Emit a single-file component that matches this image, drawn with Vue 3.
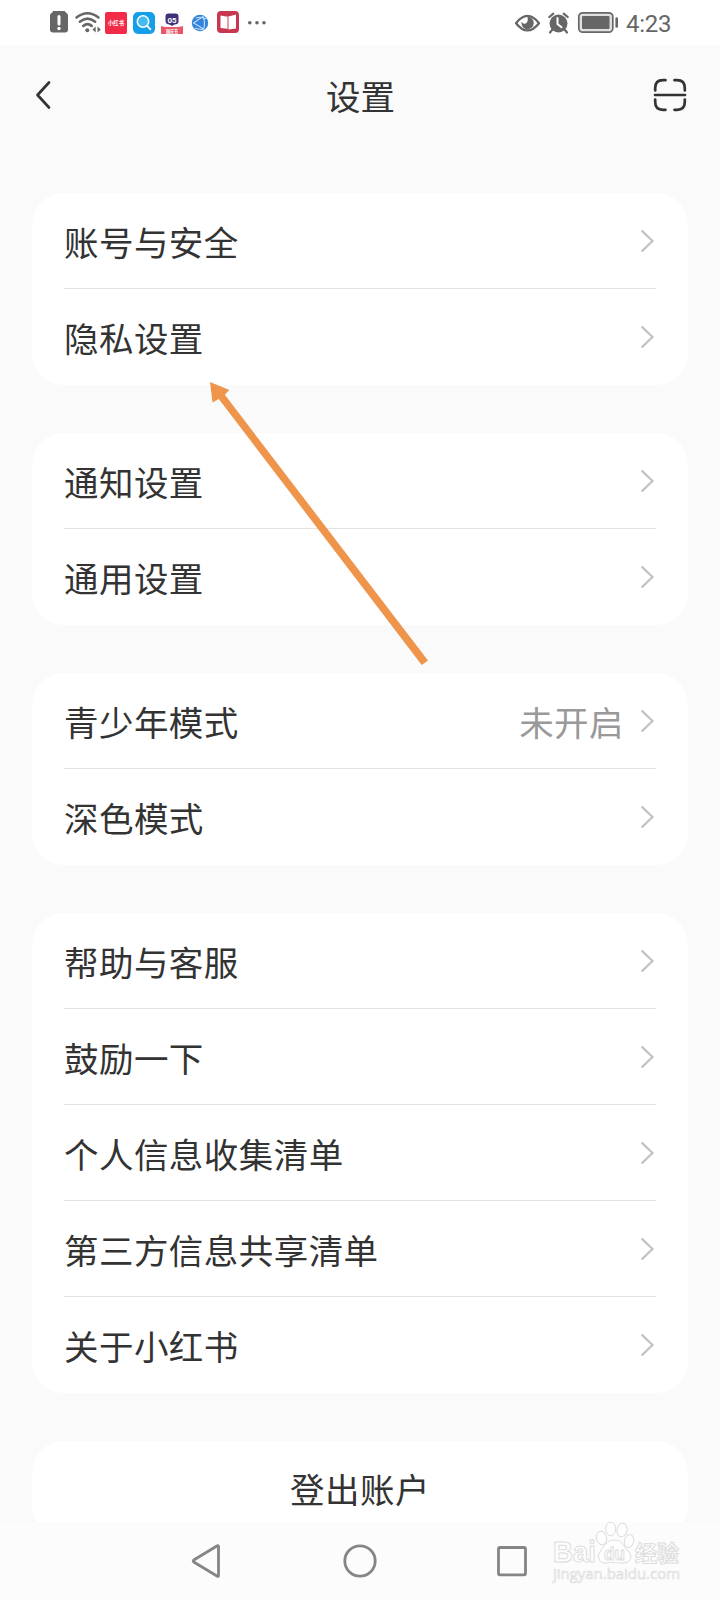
<script setup>
const groups = [
  [{ label: '账号与安全' }, { label: '隐私设置' }],
  [{ label: '通知设置' }, { label: '通用设置' }],
  [{ label: '青少年模式', value: '未开启' }, { label: '深色模式' }],
  [
    { label: '帮助与客服' },
    { label: '鼓励一下' },
    { label: '个人信息收集清单' },
    { label: '第三方信息共享清单' },
    { label: '关于小红书' },
  ],
]
</script>

<template>
  <div class="screen">
    <div class="status">
      <svg class="status-icons" width="230" height="45" viewBox="40 0 230 45">
        <path d="M53.500 11H64.500l3.500 3.500v15a3 3 0 0 1-3 3H53a3 3 0 0 1-3-3V14.500z" fill="#666" />
        <path d="M59 16.500v7.500" stroke="#fff" stroke-width="3" stroke-linecap="round" />
        <circle cx="59" cy="28.500" r="1.700" fill="#fff" />
        <g fill="none" stroke="#666" stroke-width="2.500" stroke-linecap="round">
          <path d="M76.500 17.500q11-8.500 22 0" />
          <path d="M79.800 21.800q7.700-6.400 15.400 0" />
          <path d="M83.200 26q4.300-3.800 8.600 0" />
        </g>
        <circle cx="87.300" cy="30.300" r="2" fill="#666" />
        <path d="M95.700 26.500v6l-3.300-3zM97.500 26.500v6l3.300-3z" fill="#666" />
        <rect x="105" y="12" width="22" height="22" rx="2" fill="#f22b49" />
        <text x="108" y="25.400" class="tiny" textLength="16" lengthAdjust="spacingAndGlyphs">小红书</text>
        <rect x="133" y="12" width="22" height="22" rx="5" fill="#159fe8" />
        <circle cx="143" cy="21.500" r="5.700" fill="#45b9f0" stroke="#fff" stroke-width="1.600" />
        <path d="M147.200 25.800l3.200 3.500" stroke="#fff" stroke-width="1.800" stroke-linecap="round" />
        <path d="M168.500 13.500h7q3 0 3 3v5q0 3-4 3l-2.500 1.500-2.500-1.500q-4 0-4-4v-4q0-3 3-3z" fill="#413079" />
        <text x="172" y="22.500" class="badge" text-anchor="middle">05</text>
        <path d="M161 26l4 1h14l4-1v8h-22z" fill="#e85766" />
        <text x="166" y="32.600" class="ribbon" textLength="12" lengthAdjust="spacingAndGlyphs">国庆节</text>
        <circle cx="200" cy="23" r="8.200" fill="#3583d9" />
        <path d="M193.500 23l9.500-6.500q2.500 6 .7 12.500zM196 18q5-2 10 1M195 28q5 2 9 1" fill="none" stroke="#bfe0ff" stroke-width="1.100" />
        <rect x="217" y="11" width="22" height="22" rx="4" fill="#c9364f" />
        <path d="M220.500 15.500l7 1.300v12l-7-.8zM228.500 16.500l7.500-2v14l-7.500 1z" fill="#fff" />
        <path d="M228 16v13" stroke="#e7a5a9" />
        <g fill="#666">
          <circle cx="249.800" cy="22.700" r="1.800" />
          <circle cx="257" cy="22.700" r="1.800" />
          <circle cx="264" cy="22.700" r="1.800" />
        </g>
      </svg>
      <svg class="system-icons" width="110" height="45" viewBox="510 0 110 45">
        <path d="M516 23.200q11.500-14.500 23 0q-11.500 14.500-23 0z" fill="none" stroke="#666" stroke-width="2.300" stroke-linejoin="round" />
        <path d="M527.500 16.800a6.200 6.200 0 1 1-6 5q2 3 4.500 1.500 2.500-1.800 1.500-6.500z" fill="#666" />
        <circle cx="558.500" cy="23.500" r="9" fill="#666" />
        <path d="M549.300 17l4-3.300M563.700 13.700l4 3.300M552.500 29.500l-2.500 3M564.500 29.500l2.500 3" stroke="#666" stroke-width="2.200" stroke-linecap="round" />
        <path d="M557.500 18v6l4 3.200" fill="none" stroke="#fff" stroke-width="2" stroke-linecap="round" />
        <rect x="578.800" y="12.800" width="34" height="19.400" rx="4" fill="#e0e0e0" stroke="#666" stroke-width="1.700" />
        <rect x="582" y="16" width="27.500" height="13" rx="1" fill="#666" />
        <path d="M616.700 18.500v8" stroke="#666" stroke-width="2.600" stroke-linecap="round" />
      </svg>
      <span class="clock">4:23</span>
    </div>

    <header class="header">
      <svg width="16" height="30" viewBox="0 0 16 30" class="stroke-dark">
        <path d="M14 2.500L2.500 15 14 27.500" />
      </svg>
      <h1>设置</h1>
      <svg width="34" height="34" viewBox="0 0 34 34" class="stroke-dark">
        <path d="M2.200 12.500V10q0-7.800 7.800-7.800h2.500M21.500 2.200H24q7.800 0 7.800 7.800v2.500M2.200 21.500V24q0 7.800 7.800 7.800h2.500M21.500 31.800H24q7.800 0 7.800-7.800v-2.500M2 17h30" />
      </svg>
    </header>

    <main class="content">
      <section v-for="(rows, g) in groups" :key="g" class="card">
        <div v-for="row in rows" :key="row.label" class="row">
          <span class="label">{{ row.label }}</span>
          <span v-if="row.value" class="value">{{ row.value }}</span>
          <svg width="14" height="24" viewBox="0 0 14 24" class="chevron">
            <path d="M2.300 2.200L12.500 12 2.300 21.800" />
          </svg>
        </div>
      </section>
      <section class="card logout">登出账户</section>
    </main>

    <nav class="nav">
      <svg width="720" height="78" viewBox="0 1522 720 78">
        <g fill="none" stroke="#858585" stroke-width="2.800" stroke-linejoin="round">
          <path d="M218.500 1546.500v29q0 1.200-1.200.7l-23.500-14.200q-1.200-1 0-2l23.500-14.200q1.200-.5 1.200.7z" />
          <circle cx="360" cy="1561" r="15.200" />
          <rect x="498.500" y="1547.500" width="27" height="27.300" rx="1.500" />
        </g>
      </svg>
    </nav>

    <svg class="watermark" width="150" height="72" viewBox="545 1518 150 72">
      <g fill="#fefefe" stroke="#dcdcdc" stroke-width="1">
        <ellipse cx="601.500" cy="1538" rx="5" ry="6.800" transform="rotate(-15 601.500 1538)" />
        <ellipse cx="610.700" cy="1529" rx="5" ry="6.800" />
        <ellipse cx="622" cy="1530" rx="5" ry="6.800" transform="rotate(12 622 1530)" />
        <ellipse cx="629" cy="1541" rx="4.700" ry="6.500" transform="rotate(15 629 1541)" />
        <path d="M615 1540c7 0 8 6 13 11s3 12-5 12-12-1-17 0-10-5-6-11 7-12 15-12z" />
        <text x="553" y="1562" class="wm-latin" textLength="43" lengthAdjust="spacingAndGlyphs">Bai</text>
        <text x="604" y="1559.500" class="wm-du" textLength="21" lengthAdjust="spacingAndGlyphs">du</text>
        <text x="635" y="1560.500" class="wm-cjk" textLength="44" lengthAdjust="spacingAndGlyphs">经验</text>
        <text x="553" y="1579" class="wm-url" textLength="127" lengthAdjust="spacingAndGlyphs">jingyan.baidu.com</text>
      </g>
    </svg>

    <svg class="arrow" width="225" height="290" viewBox="205 377 225 290">
      <path d="M210 382l19.300 8-4.500 4.800L428 660.500l-6.300 4.500L218.800 399l-6.300 3.500z" fill="#ef944b" />
    </svg>
  </div>
</template>

<style>
body {
  margin: 0;
}
</style>

<style scoped>
.screen {
  position: relative;
  width: 720px;
  height: 1600px;
  overflow: hidden;
  display: flex;
  flex-direction: column;
  background: #fafafa;
  color: #333;
  font-family: "Noto Sans CJK SC", sans-serif;
}
svg {
  display: block;
  flex: none;
}
.status {
  height: 45px;
  flex: none;
  display: flex;
  background: #fff;
  padding: 0 49px 0 40px;
}
.system-icons {
  margin-left: auto;
}
.clock {
  width: 51px;
  padding-left: 6px;
  box-sizing: border-box;
  white-space: nowrap;
  font: 24px/48px Roboto, sans-serif;
  letter-spacing: -0.300px;
  color: #666;
}
.tiny {
  font-size: 6px;
  font-weight: 700;
  fill: #fff;
}
.badge {
  font: 700 8px Roboto, sans-serif;
  fill: #fff;
}
.ribbon {
  font-size: 5px;
  font-weight: 700;
  fill: #fff;
}
.header {
  height: 100px;
  flex: none;
  box-sizing: border-box;
  padding: 0 33px 0 35px;
  display: flex;
  align-items: center;
  justify-content: space-between;
}
.header h1 {
  margin: 0 0 0 17px;
  font-size: 34.500px;
  line-height: 48px;
  font-weight: 400;
}
.stroke-dark {
  fill: none;
  stroke: #333;
  stroke-width: 2.700;
  stroke-linecap: round;
  stroke-linejoin: round;
}
.content {
  flex: 1;
  min-height: 0;
  overflow: hidden;
  padding: 48px 32px 0;
  display: flex;
  flex-direction: column;
  gap: 48px;
}
.card {
  flex: none;
  padding: 0 32px;
  background: #fff;
  border-radius: 32px;
}
.row {
  height: 96px;
  box-sizing: border-box;
  border-bottom: 1px solid #e3e3e3;
  display: flex;
  align-items: center;
}
.row:last-child {
  border-bottom-color: transparent;
}
.label,
.value {
  font-size: 34.500px;
  line-height: 48px;
  letter-spacing: 0.450px;
}
.label {
  flex: 1;
}
.value {
  color: #999;
  margin-right: 16px;
}
.chevron {
  margin-right: 2px;
  fill: none;
  stroke: #c4c4c4;
  stroke-width: 2.400;
  stroke-linecap: round;
  stroke-linejoin: round;
}
.logout {
  height: 96px;
  box-sizing: border-box;
  padding-top: 1px;
  text-align: center;
  font-size: 34.500px;
  line-height: 93px;
  letter-spacing: 0.450px;
}
.nav {
  height: 78px;
  flex: none;
  background: #fcfcfc;
}
.watermark {
  position: absolute;
  left: 545px;
  top: 1518px;
}
.wm-latin {
  font: 700 29px "Liberation Sans", sans-serif;
}
.wm-du {
  font: 700 19px "Liberation Sans", sans-serif;
}
.wm-cjk {
  font-size: 22px;
  font-weight: 700;
}
.wm-url {
  font: 15px "Open Sans", sans-serif;
  stroke-width: 0.700;
}
.arrow {
  position: absolute;
  left: 205px;
  top: 377px;
}
</style>
